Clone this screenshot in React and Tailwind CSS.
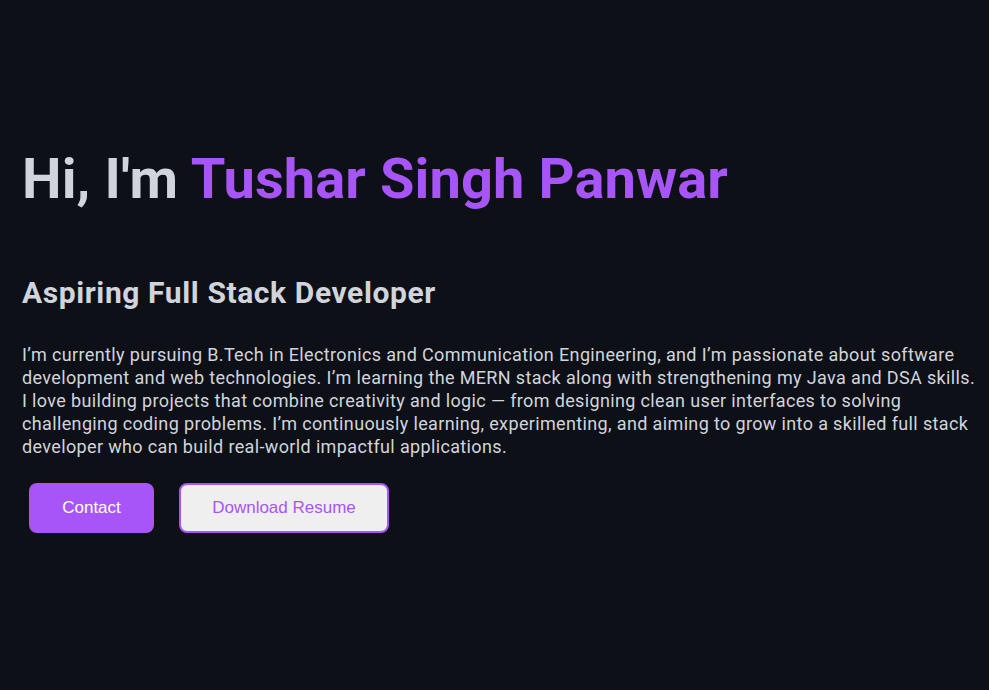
export default function App() {
  return (
    <div className="min-h-[690px] w-full bg-[#0d1017] font-['Roboto',sans-serif] text-[#d1d5db]">
      <section className="px-[22px] pt-[147px]">
        <h1 className="text-[56px] leading-[64px] font-bold tracking-[0.1px]">
          Hi, I'm <span className="text-[#a855f7]">Tushar Singh Panwar</span>
        </h1>
        <h2 className="mt-[64px] text-[30px] leading-[36px] font-bold tracking-[0.02em]">Aspiring Full Stack Developer</h2>
        <p className="mt-[32px] text-[18px] leading-[23px] mr-[-14px] tracking-[0.02em]">
          I’m currently pursuing B.Tech in Electronics and Communication Engineering, and I’m passionate about software development and web technologies. I’m learning the MERN stack along with strengthening my Java and DSA skills. I love building projects that combine creativity and logic — from designing clean user interfaces to solving challenging coding problems. I’m continuously learning, experimenting, and aiming to grow into a skilled full stack developer who can build real-world impactful applications.
        </p>
        <div className="mt-[25px] ml-[7px] flex gap-[25px] font-['Liberation_Sans',Arial,sans-serif] text-[17px]">
          <button className="h-[50px] w-[125px] rounded-[8px] bg-[#a855f7] text-white">Contact</button>
          <button className="h-[50px] w-[210px] rounded-[8px] border-2 border-[#a855f7] bg-[#efefef] text-[#a855f7]">Download Resume</button>
        </div>
      </section>
    </div>
  );
}
